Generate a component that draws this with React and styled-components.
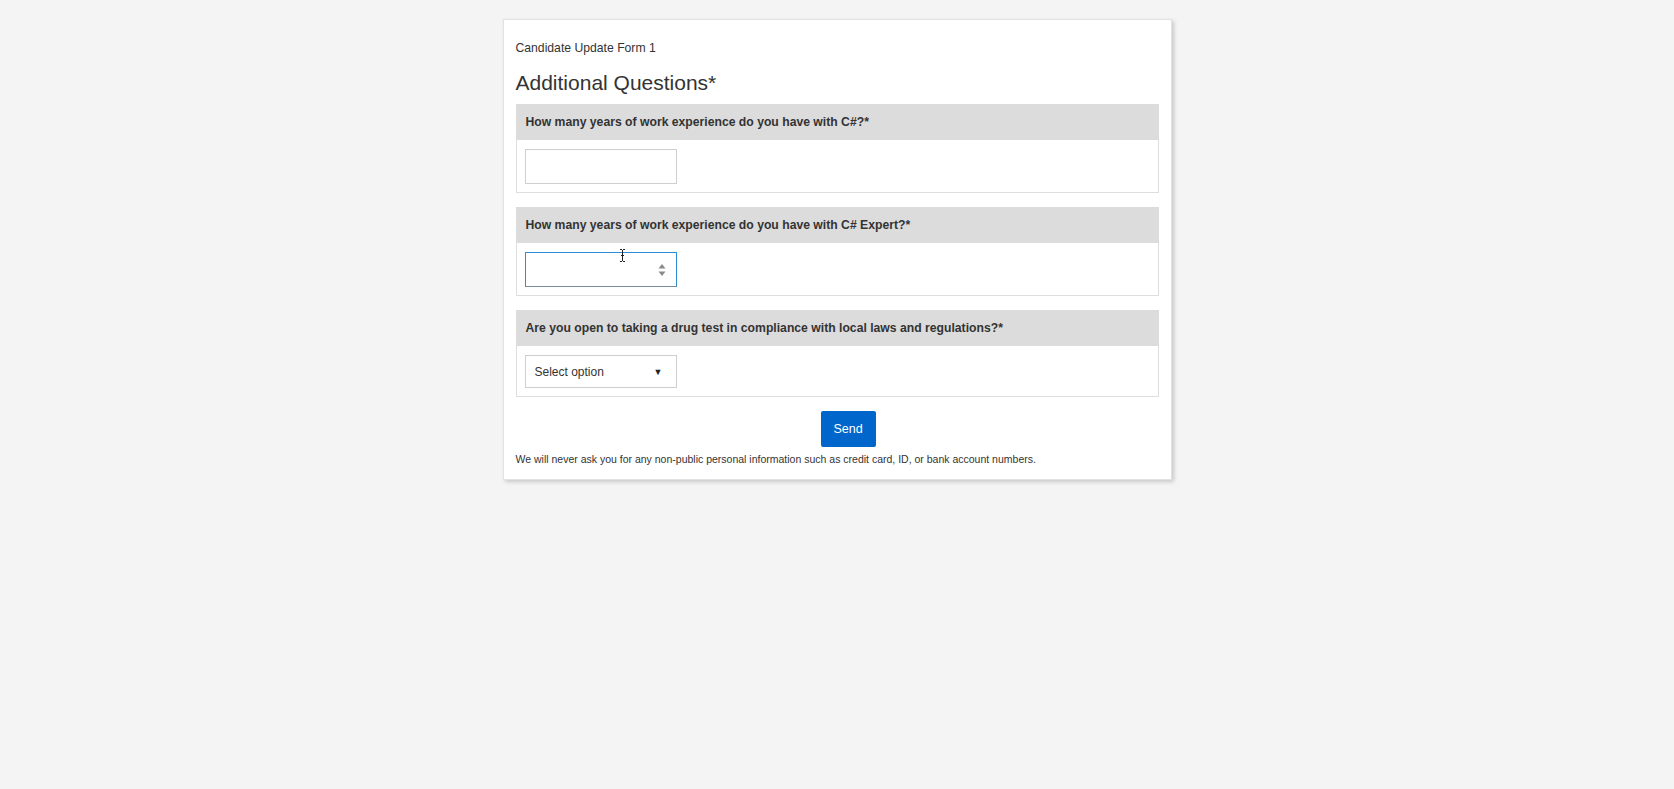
import React from 'react';
import styled, { createGlobalStyle } from 'styled-components';

const GlobalStyle = createGlobalStyle`
  html, body {
    margin: 0;
    padding: 0;
    background: #f4f4f4;
    font-family: "Liberation Sans", Arial, sans-serif;
    color: #333;
  }
`;

const Page = styled.div`
  min-height: 789px;
  padding-top: 19px;
  box-sizing: border-box;
`;

const Card = styled.form`
  position: relative;
  width: 669px;
  margin: 0 auto;
  box-sizing: border-box;
  background: #fff;
  border: 1px solid #e2e2e2;
  box-shadow: 2px 2px 4px rgba(0, 0, 0, 0.18);
  padding: 20px 12px 13px 12px;
`;

const FormName = styled.div`
  font-size: 12.2px;
  line-height: 16px;
  color: #333;
`;

const Heading = styled.h2`
  margin: 15px 0 9px;
  font-size: 21px;
  line-height: 24px;
  font-weight: normal;
  color: #333;
`;

const Question = styled.div`
  border: 1px solid #dedede;
  margin-bottom: 14px;
`;

const QuestionLabel = styled.label`
  display: block;
  background: #dcdcdc;
  margin: -1px -1px 0;
  padding: 11px 10px 10px;
  font-size: 12.2px;
  line-height: 15px;
  font-weight: bold;
  color: #333;
`;

const QuestionBody = styled.div`
  padding: 9px 8px 8px;
`;

const TextInput = styled.div`
  position: relative;
  width: 152px;
  height: ${p => p.$height || 35}px;
  box-sizing: border-box;
  border: 1px solid ${p => (p.$focused ? '#2b8ed6' : '#cfcfcf')};
  border-bottom-color: ${p => (p.$focused ? '#7a8a96' : '#cfcfcf')};
  background: #fff;
  display: flex;
  align-items: center;
  justify-content: space-between;
  padding: 0 9px;
  font-size: 12px;
  color: #333;
`;

const Spinner = styled.svg`
  margin-left: auto;
  margin-right: 1px;
`;

const Caret = styled.span`
  font-size: 9px;
  color: #222;
  margin-right: 4px;
`;

const Cursor = styled.svg`
  position: absolute;
  left: 93px;
  top: -4px;
`;

const Actions = styled.div`
  display: flex;
  padding-left: 305px;
  margin-top: 14px;
`;

const SendButton = styled.button`
  width: 55px;
  height: 36px;
  border: none;
  border-radius: 2px;
  background: #0066cc;
  color: #fff;
  font-family: "Liberation Sans", Arial, sans-serif;
  font-size: 12.5px;
  cursor: pointer;
`;

const Disclaimer = styled.p`
  margin: 5px 0 0;
  font-size: 10.5px;
  line-height: 14px;
  color: #333;
`;

const questions = [
  { label: 'How many years of work experience do you have with C#?*', kind: 'text' },
  { label: 'How many years of work experience do you have with C# Expert?*', kind: 'number' },
  { label: 'Are you open to taking a drug test in compliance with local laws and regulations?*', kind: 'select' },
];

const Field = ({ kind }) => {
  if (kind === 'number') {
    return (
      <TextInput $focused>
        <Spinner width="8" height="14" viewBox="0 0 8 14">
          <path d="M4 1 L7.5 5.5 L0.5 5.5 Z" fill="#8a8a8a" />
          <path d="M4 13 L7.5 8.5 L0.5 8.5 Z" fill="#8a8a8a" />
        </Spinner>
        <Cursor width="7" height="13" viewBox="0 0 7 13">
          <path d="M1 0.5 H3 M4 0.5 H6 M3.5 1 V12 M1 12.5 H3 M4 12.5 H6 M2 6.5 H5" stroke="#222" strokeWidth="1" fill="none" />
        </Cursor>
      </TextInput>
    );
  }
  if (kind === 'select') {
    return (
      <TextInput $height={33}>
        <span>Select option</span>
        <Caret>▼</Caret>
      </TextInput>
    );
  }
  return <TextInput />;
};

export default function App() {
  return (
    <>
      <GlobalStyle />
      <Page>
        <Card onSubmit={e => e.preventDefault()}>
          <FormName>Candidate Update Form 1</FormName>
          <Heading>Additional Questions*</Heading>
          {questions.map((q, i) => (
            <Question key={i}>
              <QuestionLabel>{q.label}</QuestionLabel>
              <QuestionBody>
                <Field kind={q.kind} />
              </QuestionBody>
            </Question>
          ))}
          <Actions>
            <SendButton type="submit">Send</SendButton>
          </Actions>
          <Disclaimer>
            We will never ask you for any non-public personal information such as credit card, ID, or bank account numbers.
          </Disclaimer>
        </Card>
      </Page>
    </>
  );
}
